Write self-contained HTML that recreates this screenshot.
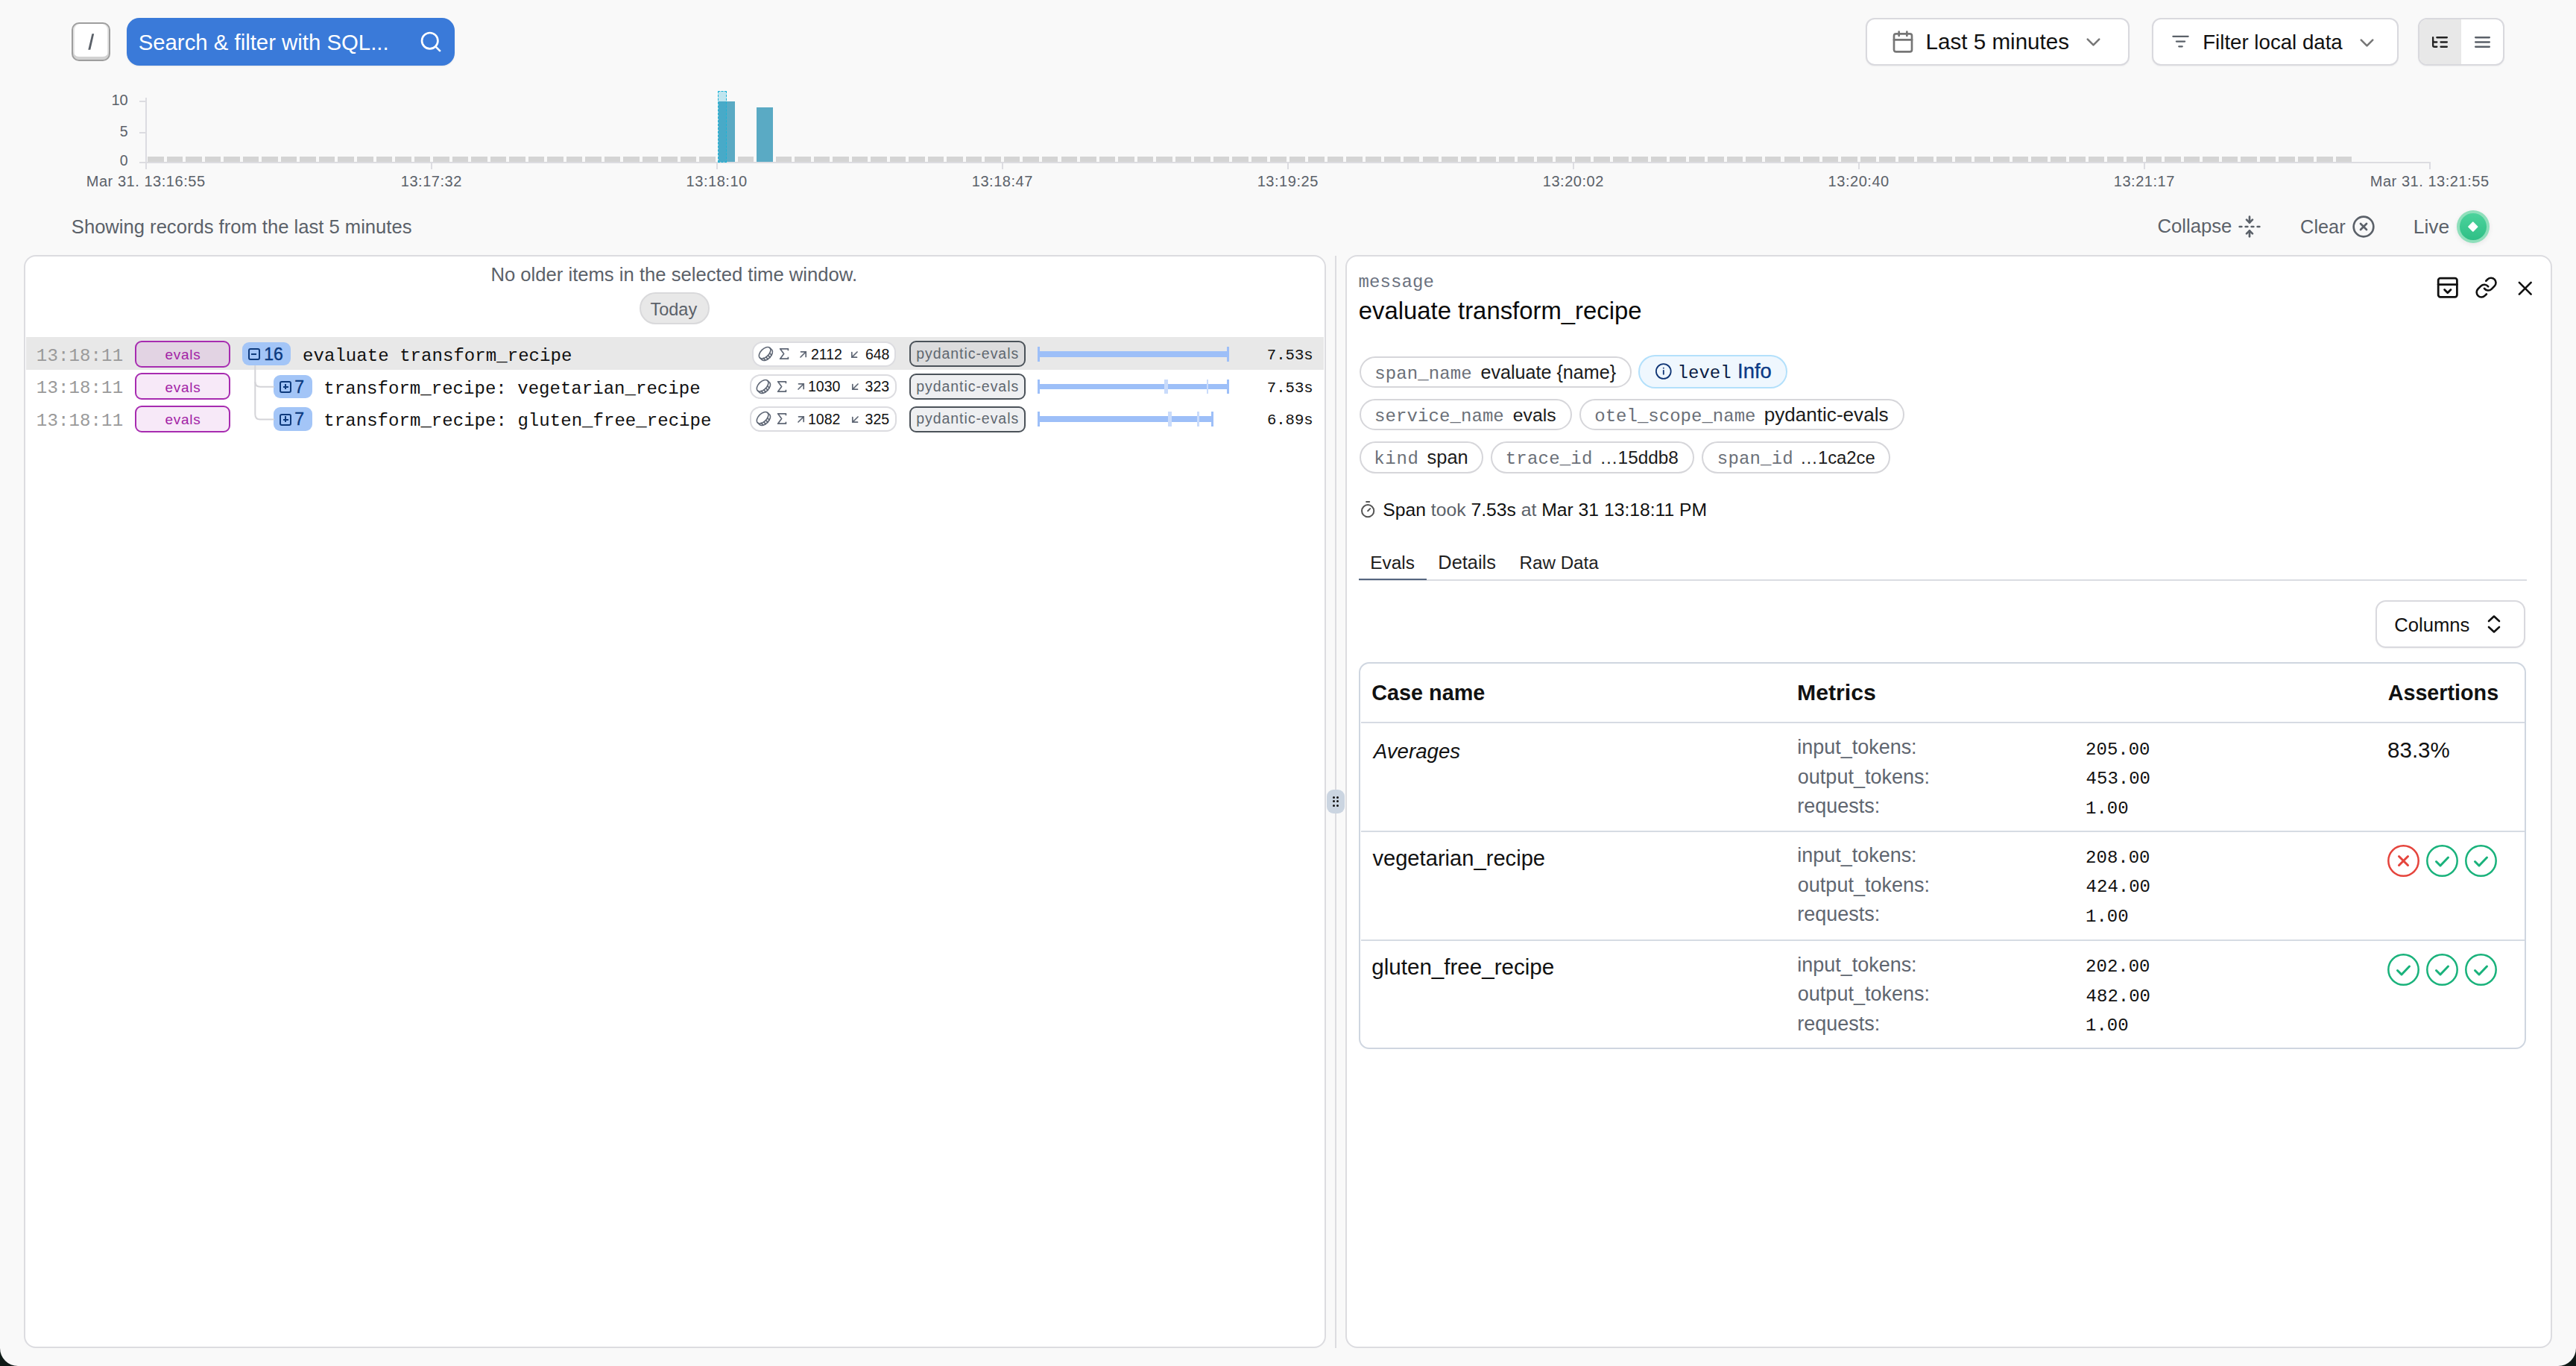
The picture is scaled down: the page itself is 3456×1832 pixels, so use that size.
<!DOCTYPE html>
<html><head><meta charset="utf-8"><style>
html,body{margin:0;padding:0;}
body{width:3456px;height:1832px;overflow:hidden;position:relative;background:#f9f9f9;font-family:"Liberation Sans",sans-serif;}
.t{position:absolute;white-space:pre;}
.r{position:absolute;}
</style></head><body>
<div class="r" style="left:96.20px;top:29.90px;width:51.50px;height:51.90px;background:#fff;border:2px solid #9e9e9e;border-radius:10px;box-sizing:border-box;box-shadow:inset 0 -4px 0 #d2d2d2, inset 2px 0 0 #e2e2e2, inset -2px 0 0 #e2e2e2;"></div>
<svg class="r" style="left:0;top:0" width="160" height="90"><path d="M123.4 45.2 H126.2 L121.3 66.8 H118.3 Z" fill="#5b6169"/></svg>
<div class="r" style="left:170.00px;top:24.00px;width:440.00px;height:64.00px;background:#3a7ad9;border-radius:17px;box-shadow:0 1px 2px rgba(0,0,0,.08);"></div>
<div class="t" style="left:185.67px;top:38.83px;font-size:29.35px;line-height:35px;color:#fff;font-family:'Liberation Sans', sans-serif;">Search &amp; filter with SQL...</div>
<svg class="r" style="left:561.90px;top:39.70px;" width="32.10" height="32.10" viewBox="0 0 24 24" fill="none" stroke="#fff" stroke-width="2" stroke-linecap="round" stroke-linejoin="round"><circle cx="11" cy="11" r="8"/><path d="m21 21-4.3-4.3"/></svg>
<div class="r" style="left:2503.00px;top:24.00px;width:354.00px;height:63.50px;background:#fff;border:2px solid #d9d9de;border-radius:12px;box-sizing:border-box;box-shadow:0 1px 2px rgba(0,0,0,.05);"></div>
<svg class="r" style="left:2537.00px;top:39.60px;" width="32.00" height="32.00" viewBox="0 0 24 24" fill="none" stroke="#767676" stroke-width="2" stroke-linecap="round" stroke-linejoin="round"><rect width="18" height="18" x="3" y="4" rx="2"/><path d="M16 2v4"/><path d="M8 2v4"/><path d="M3 10h18"/></svg>
<div class="t" style="left:2583.57px;top:37.94px;font-size:29.60px;line-height:36px;color:#111;font-family:'Liberation Sans', sans-serif;">Last 5 minutes</div>
<svg class="r" style="left:2792.50px;top:41.00px;" width="31.00" height="31.00" viewBox="0 0 24 24" fill="none" stroke="#777" stroke-width="2" stroke-linecap="round" stroke-linejoin="round"><path d="m6 9 6 6 6-6"/></svg>
<div class="r" style="left:2886.50px;top:24.00px;width:331.00px;height:63.50px;background:#fff;border:2px solid #d9d9de;border-radius:12px;box-sizing:border-box;box-shadow:0 1px 2px rgba(0,0,0,.05);"></div>
<svg class="r" style="left:2912.20px;top:42.00px;" width="27.00" height="27.00" viewBox="0 0 24 24" fill="none" stroke="#5b6169" stroke-width="2" stroke-linecap="round" stroke-linejoin="round"><path d="M3 6h18"/><path d="M7 12h10"/><path d="M10 18h4"/></svg>
<div class="t" style="left:2955.23px;top:39.91px;font-size:27.66px;line-height:33px;color:#111;font-family:'Liberation Sans', sans-serif;">Filter local data</div>
<svg class="r" style="left:3160.10px;top:41.50px;" width="31.00" height="31.00" viewBox="0 0 24 24" fill="none" stroke="#777" stroke-width="2" stroke-linecap="round" stroke-linejoin="round"><path d="m6 9 6 6 6-6"/></svg>
<div class="r" style="left:3244.00px;top:24.00px;width:116.00px;height:63.50px;background:#fff;border:2px solid #d9d9de;border-radius:12px;box-sizing:border-box;overflow:hidden;box-shadow:0 1px 2px rgba(0,0,0,.05);"></div>
<div class="r" style="left:3246.00px;top:26.00px;width:55.60px;height:59.50px;background:#e8e8e8;border-radius:10px 0 0 10px;"></div>
<svg class="r" style="left:3261.00px;top:43.50px;" width="25.00" height="25.00" viewBox="0 0 24 24" fill="none" stroke="#222" stroke-width="2.2" stroke-linecap="round" stroke-linejoin="round"><path d="M21 12h-8"/><path d="M21 6H8"/><path d="M21 18h-8"/><path d="M3 6v4c0 1.1.9 2 2 2h3"/><path d="M3 10v6c0 1.1.9 2 2 2h3"/></svg>
<svg class="r" style="left:3317.50px;top:43.50px;" width="25.00" height="25.00" viewBox="0 0 24 24" fill="none" stroke="#5b6169" stroke-width="2.2" stroke-linecap="round" stroke-linejoin="round"><path d="M3 6h18"/><path d="M3 12h18"/><path d="M3 18h18"/></svg>
<div class="r" style="left:195.00px;top:131.00px;width:2.00px;height:95.50px;background:#dcdce1;"></div>
<div class="r" style="left:187.00px;top:135.00px;width:9.00px;height:2.00px;background:#dcdce1;"></div>
<div class="r" style="left:187.00px;top:177.00px;width:9.00px;height:2.00px;background:#dcdce1;"></div>
<div class="r" style="left:187.00px;top:217.00px;width:9.00px;height:2.00px;background:#dcdce1;"></div>
<div class="r" style="left:187.00px;top:217.00px;width:3074.00px;height:2.00px;background:#dcdce1;"></div>
<div class="r" style="left:577.80px;top:218.00px;width:2.00px;height:8.60px;background:#dcdce1;"></div>
<div class="r" style="left:960.80px;top:218.00px;width:2.00px;height:8.60px;background:#dcdce1;"></div>
<div class="r" style="left:1343.80px;top:218.00px;width:2.00px;height:8.60px;background:#dcdce1;"></div>
<div class="r" style="left:1726.80px;top:218.00px;width:2.00px;height:8.60px;background:#dcdce1;"></div>
<div class="r" style="left:2109.80px;top:218.00px;width:2.00px;height:8.60px;background:#dcdce1;"></div>
<div class="r" style="left:2492.80px;top:218.00px;width:2.00px;height:8.60px;background:#dcdce1;"></div>
<div class="r" style="left:2875.80px;top:218.00px;width:2.00px;height:8.60px;background:#dcdce1;"></div>
<div class="r" style="left:3258.80px;top:218.00px;width:2.00px;height:8.60px;background:#dcdce1;"></div>
<div class="t" style="left:149.47px;top:121.95px;font-size:20.06px;line-height:24px;color:#5b6169;font-family:'Liberation Sans', sans-serif;">10</div>
<div class="t" style="left:160.72px;top:164.54px;font-size:19.50px;line-height:23px;color:#5b6169;font-family:'Liberation Sans', sans-serif;">5</div>
<div class="t" style="left:160.74px;top:204.44px;font-size:19.50px;line-height:23px;color:#5b6169;font-family:'Liberation Sans', sans-serif;">0</div>
<div class="t" style="left:115.76px;top:230.77px;font-size:20.00px;line-height:24px;color:#5b6169;font-family:'Liberation Sans', sans-serif;letter-spacing:0.538px;">Mar 31. 13:16:55</div>
<div class="t" style="left:537.73px;top:230.77px;font-size:20.00px;line-height:24px;color:#5b6169;font-family:'Liberation Sans', sans-serif;letter-spacing:0.538px;">13:17:32</div>
<div class="t" style="left:920.62px;top:230.77px;font-size:20.00px;line-height:24px;color:#5b6169;font-family:'Liberation Sans', sans-serif;letter-spacing:0.538px;">13:18:10</div>
<div class="t" style="left:1303.73px;top:230.77px;font-size:20.00px;line-height:24px;color:#5b6169;font-family:'Liberation Sans', sans-serif;letter-spacing:0.538px;">13:18:47</div>
<div class="t" style="left:1686.65px;top:230.77px;font-size:20.00px;line-height:24px;color:#5b6169;font-family:'Liberation Sans', sans-serif;letter-spacing:0.538px;">13:19:25</div>
<div class="t" style="left:2069.73px;top:230.77px;font-size:20.00px;line-height:24px;color:#5b6169;font-family:'Liberation Sans', sans-serif;letter-spacing:0.538px;">13:20:02</div>
<div class="t" style="left:2452.62px;top:230.77px;font-size:20.00px;line-height:24px;color:#5b6169;font-family:'Liberation Sans', sans-serif;letter-spacing:0.538px;">13:20:40</div>
<div class="t" style="left:2835.73px;top:230.77px;font-size:20.00px;line-height:24px;color:#5b6169;font-family:'Liberation Sans', sans-serif;letter-spacing:0.538px;">13:21:17</div>
<div class="t" style="left:3179.76px;top:230.77px;font-size:20.00px;line-height:24px;color:#5b6169;font-family:'Liberation Sans', sans-serif;letter-spacing:0.538px;">Mar 31. 13:21:55</div>
<div class="r" style="left:964.01px;top:136.20px;width:21.50px;height:80.40px;background:#5aaac4;"></div>
<div class="r" style="left:1015.06px;top:144.10px;width:21.50px;height:72.50px;background:#5aaac4;"></div>
<div class="r" style="left:198.20px;top:210.1px;width:21.5px;height:6.5px;background:#d4d4d4"></div><div class="r" style="left:223.73px;top:210.1px;width:21.5px;height:6.5px;background:#d4d4d4"></div><div class="r" style="left:249.25px;top:210.1px;width:21.5px;height:6.5px;background:#d4d4d4"></div><div class="r" style="left:274.78px;top:210.1px;width:21.5px;height:6.5px;background:#d4d4d4"></div><div class="r" style="left:300.31px;top:210.1px;width:21.5px;height:6.5px;background:#d4d4d4"></div><div class="r" style="left:325.83px;top:210.1px;width:21.5px;height:6.5px;background:#d4d4d4"></div><div class="r" style="left:351.36px;top:210.1px;width:21.5px;height:6.5px;background:#d4d4d4"></div><div class="r" style="left:376.89px;top:210.1px;width:21.5px;height:6.5px;background:#d4d4d4"></div><div class="r" style="left:402.42px;top:210.1px;width:21.5px;height:6.5px;background:#d4d4d4"></div><div class="r" style="left:427.94px;top:210.1px;width:21.5px;height:6.5px;background:#d4d4d4"></div><div class="r" style="left:453.47px;top:210.1px;width:21.5px;height:6.5px;background:#d4d4d4"></div><div class="r" style="left:479.00px;top:210.1px;width:21.5px;height:6.5px;background:#d4d4d4"></div><div class="r" style="left:504.52px;top:210.1px;width:21.5px;height:6.5px;background:#d4d4d4"></div><div class="r" style="left:530.05px;top:210.1px;width:21.5px;height:6.5px;background:#d4d4d4"></div><div class="r" style="left:555.58px;top:210.1px;width:21.5px;height:6.5px;background:#d4d4d4"></div><div class="r" style="left:581.11px;top:210.1px;width:21.5px;height:6.5px;background:#d4d4d4"></div><div class="r" style="left:606.63px;top:210.1px;width:21.5px;height:6.5px;background:#d4d4d4"></div><div class="r" style="left:632.16px;top:210.1px;width:21.5px;height:6.5px;background:#d4d4d4"></div><div class="r" style="left:657.69px;top:210.1px;width:21.5px;height:6.5px;background:#d4d4d4"></div><div class="r" style="left:683.21px;top:210.1px;width:21.5px;height:6.5px;background:#d4d4d4"></div><div class="r" style="left:708.74px;top:210.1px;width:21.5px;height:6.5px;background:#d4d4d4"></div><div class="r" style="left:734.27px;top:210.1px;width:21.5px;height:6.5px;background:#d4d4d4"></div><div class="r" style="left:759.79px;top:210.1px;width:21.5px;height:6.5px;background:#d4d4d4"></div><div class="r" style="left:785.32px;top:210.1px;width:21.5px;height:6.5px;background:#d4d4d4"></div><div class="r" style="left:810.85px;top:210.1px;width:21.5px;height:6.5px;background:#d4d4d4"></div><div class="r" style="left:836.38px;top:210.1px;width:21.5px;height:6.5px;background:#d4d4d4"></div><div class="r" style="left:861.90px;top:210.1px;width:21.5px;height:6.5px;background:#d4d4d4"></div><div class="r" style="left:887.43px;top:210.1px;width:21.5px;height:6.5px;background:#d4d4d4"></div><div class="r" style="left:912.96px;top:210.1px;width:21.5px;height:6.5px;background:#d4d4d4"></div><div class="r" style="left:938.48px;top:210.1px;width:21.5px;height:6.5px;background:#d4d4d4"></div><div class="r" style="left:989.54px;top:210.1px;width:21.5px;height:6.5px;background:#d4d4d4"></div><div class="r" style="left:1040.59px;top:210.1px;width:21.5px;height:6.5px;background:#d4d4d4"></div><div class="r" style="left:1066.12px;top:210.1px;width:21.5px;height:6.5px;background:#d4d4d4"></div><div class="r" style="left:1091.64px;top:210.1px;width:21.5px;height:6.5px;background:#d4d4d4"></div><div class="r" style="left:1117.17px;top:210.1px;width:21.5px;height:6.5px;background:#d4d4d4"></div><div class="r" style="left:1142.70px;top:210.1px;width:21.5px;height:6.5px;background:#d4d4d4"></div><div class="r" style="left:1168.23px;top:210.1px;width:21.5px;height:6.5px;background:#d4d4d4"></div><div class="r" style="left:1193.75px;top:210.1px;width:21.5px;height:6.5px;background:#d4d4d4"></div><div class="r" style="left:1219.28px;top:210.1px;width:21.5px;height:6.5px;background:#d4d4d4"></div><div class="r" style="left:1244.81px;top:210.1px;width:21.5px;height:6.5px;background:#d4d4d4"></div><div class="r" style="left:1270.33px;top:210.1px;width:21.5px;height:6.5px;background:#d4d4d4"></div><div class="r" style="left:1295.86px;top:210.1px;width:21.5px;height:6.5px;background:#d4d4d4"></div><div class="r" style="left:1321.39px;top:210.1px;width:21.5px;height:6.5px;background:#d4d4d4"></div><div class="r" style="left:1346.92px;top:210.1px;width:21.5px;height:6.5px;background:#d4d4d4"></div><div class="r" style="left:1372.44px;top:210.1px;width:21.5px;height:6.5px;background:#d4d4d4"></div><div class="r" style="left:1397.97px;top:210.1px;width:21.5px;height:6.5px;background:#d4d4d4"></div><div class="r" style="left:1423.50px;top:210.1px;width:21.5px;height:6.5px;background:#d4d4d4"></div><div class="r" style="left:1449.02px;top:210.1px;width:21.5px;height:6.5px;background:#d4d4d4"></div><div class="r" style="left:1474.55px;top:210.1px;width:21.5px;height:6.5px;background:#d4d4d4"></div><div class="r" style="left:1500.08px;top:210.1px;width:21.5px;height:6.5px;background:#d4d4d4"></div><div class="r" style="left:1525.60px;top:210.1px;width:21.5px;height:6.5px;background:#d4d4d4"></div><div class="r" style="left:1551.13px;top:210.1px;width:21.5px;height:6.5px;background:#d4d4d4"></div><div class="r" style="left:1576.66px;top:210.1px;width:21.5px;height:6.5px;background:#d4d4d4"></div><div class="r" style="left:1602.19px;top:210.1px;width:21.5px;height:6.5px;background:#d4d4d4"></div><div class="r" style="left:1627.71px;top:210.1px;width:21.5px;height:6.5px;background:#d4d4d4"></div><div class="r" style="left:1653.24px;top:210.1px;width:21.5px;height:6.5px;background:#d4d4d4"></div><div class="r" style="left:1678.77px;top:210.1px;width:21.5px;height:6.5px;background:#d4d4d4"></div><div class="r" style="left:1704.29px;top:210.1px;width:21.5px;height:6.5px;background:#d4d4d4"></div><div class="r" style="left:1729.82px;top:210.1px;width:21.5px;height:6.5px;background:#d4d4d4"></div><div class="r" style="left:1755.35px;top:210.1px;width:21.5px;height:6.5px;background:#d4d4d4"></div><div class="r" style="left:1780.87px;top:210.1px;width:21.5px;height:6.5px;background:#d4d4d4"></div><div class="r" style="left:1806.40px;top:210.1px;width:21.5px;height:6.5px;background:#d4d4d4"></div><div class="r" style="left:1831.93px;top:210.1px;width:21.5px;height:6.5px;background:#d4d4d4"></div><div class="r" style="left:1857.46px;top:210.1px;width:21.5px;height:6.5px;background:#d4d4d4"></div><div class="r" style="left:1882.98px;top:210.1px;width:21.5px;height:6.5px;background:#d4d4d4"></div><div class="r" style="left:1908.51px;top:210.1px;width:21.5px;height:6.5px;background:#d4d4d4"></div><div class="r" style="left:1934.04px;top:210.1px;width:21.5px;height:6.5px;background:#d4d4d4"></div><div class="r" style="left:1959.56px;top:210.1px;width:21.5px;height:6.5px;background:#d4d4d4"></div><div class="r" style="left:1985.09px;top:210.1px;width:21.5px;height:6.5px;background:#d4d4d4"></div><div class="r" style="left:2010.62px;top:210.1px;width:21.5px;height:6.5px;background:#d4d4d4"></div><div class="r" style="left:2036.14px;top:210.1px;width:21.5px;height:6.5px;background:#d4d4d4"></div><div class="r" style="left:2061.67px;top:210.1px;width:21.5px;height:6.5px;background:#d4d4d4"></div><div class="r" style="left:2087.20px;top:210.1px;width:21.5px;height:6.5px;background:#d4d4d4"></div><div class="r" style="left:2112.72px;top:210.1px;width:21.5px;height:6.5px;background:#d4d4d4"></div><div class="r" style="left:2138.25px;top:210.1px;width:21.5px;height:6.5px;background:#d4d4d4"></div><div class="r" style="left:2163.78px;top:210.1px;width:21.5px;height:6.5px;background:#d4d4d4"></div><div class="r" style="left:2189.31px;top:210.1px;width:21.5px;height:6.5px;background:#d4d4d4"></div><div class="r" style="left:2214.83px;top:210.1px;width:21.5px;height:6.5px;background:#d4d4d4"></div><div class="r" style="left:2240.36px;top:210.1px;width:21.5px;height:6.5px;background:#d4d4d4"></div><div class="r" style="left:2265.89px;top:210.1px;width:21.5px;height:6.5px;background:#d4d4d4"></div><div class="r" style="left:2291.41px;top:210.1px;width:21.5px;height:6.5px;background:#d4d4d4"></div><div class="r" style="left:2316.94px;top:210.1px;width:21.5px;height:6.5px;background:#d4d4d4"></div><div class="r" style="left:2342.47px;top:210.1px;width:21.5px;height:6.5px;background:#d4d4d4"></div><div class="r" style="left:2367.99px;top:210.1px;width:21.5px;height:6.5px;background:#d4d4d4"></div><div class="r" style="left:2393.52px;top:210.1px;width:21.5px;height:6.5px;background:#d4d4d4"></div><div class="r" style="left:2419.05px;top:210.1px;width:21.5px;height:6.5px;background:#d4d4d4"></div><div class="r" style="left:2444.58px;top:210.1px;width:21.5px;height:6.5px;background:#d4d4d4"></div><div class="r" style="left:2470.10px;top:210.1px;width:21.5px;height:6.5px;background:#d4d4d4"></div><div class="r" style="left:2495.63px;top:210.1px;width:21.5px;height:6.5px;background:#d4d4d4"></div><div class="r" style="left:2521.16px;top:210.1px;width:21.5px;height:6.5px;background:#d4d4d4"></div><div class="r" style="left:2546.68px;top:210.1px;width:21.5px;height:6.5px;background:#d4d4d4"></div><div class="r" style="left:2572.21px;top:210.1px;width:21.5px;height:6.5px;background:#d4d4d4"></div><div class="r" style="left:2597.74px;top:210.1px;width:21.5px;height:6.5px;background:#d4d4d4"></div><div class="r" style="left:2623.26px;top:210.1px;width:21.5px;height:6.5px;background:#d4d4d4"></div><div class="r" style="left:2648.79px;top:210.1px;width:21.5px;height:6.5px;background:#d4d4d4"></div><div class="r" style="left:2674.32px;top:210.1px;width:21.5px;height:6.5px;background:#d4d4d4"></div><div class="r" style="left:2699.85px;top:210.1px;width:21.5px;height:6.5px;background:#d4d4d4"></div><div class="r" style="left:2725.37px;top:210.1px;width:21.5px;height:6.5px;background:#d4d4d4"></div><div class="r" style="left:2750.90px;top:210.1px;width:21.5px;height:6.5px;background:#d4d4d4"></div><div class="r" style="left:2776.43px;top:210.1px;width:21.5px;height:6.5px;background:#d4d4d4"></div><div class="r" style="left:2801.95px;top:210.1px;width:21.5px;height:6.5px;background:#d4d4d4"></div><div class="r" style="left:2827.48px;top:210.1px;width:21.5px;height:6.5px;background:#d4d4d4"></div><div class="r" style="left:2853.01px;top:210.1px;width:21.5px;height:6.5px;background:#d4d4d4"></div><div class="r" style="left:2878.53px;top:210.1px;width:21.5px;height:6.5px;background:#d4d4d4"></div><div class="r" style="left:2904.06px;top:210.1px;width:21.5px;height:6.5px;background:#d4d4d4"></div><div class="r" style="left:2929.59px;top:210.1px;width:21.5px;height:6.5px;background:#d4d4d4"></div><div class="r" style="left:2955.12px;top:210.1px;width:21.5px;height:6.5px;background:#d4d4d4"></div><div class="r" style="left:2980.64px;top:210.1px;width:21.5px;height:6.5px;background:#d4d4d4"></div><div class="r" style="left:3006.17px;top:210.1px;width:21.5px;height:6.5px;background:#d4d4d4"></div><div class="r" style="left:3031.70px;top:210.1px;width:21.5px;height:6.5px;background:#d4d4d4"></div><div class="r" style="left:3057.22px;top:210.1px;width:21.5px;height:6.5px;background:#d4d4d4"></div><div class="r" style="left:3082.75px;top:210.1px;width:21.5px;height:6.5px;background:#d4d4d4"></div><div class="r" style="left:3108.28px;top:210.1px;width:21.5px;height:6.5px;background:#d4d4d4"></div><div class="r" style="left:3133.80px;top:210.1px;width:21.5px;height:6.5px;background:#d4d4d4"></div>
<div class="r" style="left:963.30px;top:122.20px;width:12.20px;height:96.30px;background:rgba(20,170,210,.25);border:1.6px dashed #1cb3d6;box-sizing:border-box;"></div>
<div class="t" style="left:95.84px;top:288.72px;font-size:25.60px;line-height:31px;color:#5b6169;font-family:'Liberation Sans', sans-serif;">Showing records from the last 5 minutes</div>
<div class="t" style="left:2894.39px;top:288.39px;font-size:25.71px;line-height:31px;color:#5b6169;font-family:'Liberation Sans', sans-serif;">Collapse</div>
<svg class="r" style="left:3001.70px;top:287.70px;" width="32.00" height="32.00" viewBox="0 0 24 24" fill="none" stroke="#5b6169" stroke-width="2" stroke-linecap="round" stroke-linejoin="round"><path d="M12 22v-6"/><path d="M12 8V2"/><path d="M4 12H2"/><path d="M10 12H8"/><path d="M16 12h-2"/><path d="M22 12h-2"/><path d="m15 19-3-3-3 3"/><path d="m15 5-3 3-3-3"/></svg>
<div class="t" style="left:3086.11px;top:289.02px;font-size:25.32px;line-height:30px;color:#5b6169;font-family:'Liberation Sans', sans-serif;">Clear</div>
<svg class="r" style="left:3155.00px;top:287.70px;" width="32.00" height="32.00" viewBox="0 0 24 24" fill="none" stroke="#5b6169" stroke-width="2" stroke-linecap="round" stroke-linejoin="round"><circle cx="12" cy="12" r="10"/><path d="m15 9-6 6"/><path d="m9 9 6 6"/></svg>
<div class="t" style="left:3237.84px;top:287.67px;font-size:26.35px;line-height:32px;color:#5b6169;font-family:'Liberation Sans', sans-serif;">Live</div>
<div class="r" style="left:3295.7px;top:281.8px;width:44.5px;height:44.5px;border-radius:50%;background:#8fdfbb;box-shadow:0 2px 6px rgba(0,0,0,.08)"></div>
<div class="r" style="left:3300.3px;top:286.4px;width:35.5px;height:35.5px;border-radius:50%;background:linear-gradient(#4cd39c,#2fbf86)"></div>
<div class="r" style="left:3313.2px;top:299.3px;width:9.6px;height:9.6px;background:#fff;transform:rotate(45deg);border-radius:1px"></div>
<!--PANELS-->
<div class="r" style="left:32.00px;top:342.00px;width:1747.00px;height:1466.00px;background:#fff;border:2px solid #dcdce0;border-radius:16px;box-sizing:border-box;"></div>
<div class="r" style="left:34.80px;top:452.20px;width:1741.20px;height:43.40px;background:#e8e8e8;"></div>
<div class="r" style="left:1791.00px;top:343.00px;width:2.00px;height:1464.90px;background:#dcdce0;"></div>
<div class="r" style="left:1780.10px;top:1059.20px;width:23.60px;height:31.70px;background:#cbd5e1;border-radius:9px;"></div>
<div class="r" style="left:1787.90px;top:1068.10px;width:3px;height:3px;border-radius:50%;background:#111"></div>
<div class="r" style="left:1787.90px;top:1073.40px;width:3px;height:3px;border-radius:50%;background:#111"></div>
<div class="r" style="left:1787.90px;top:1078.80px;width:3px;height:3px;border-radius:50%;background:#111"></div>
<div class="r" style="left:1793.30px;top:1068.10px;width:3px;height:3px;border-radius:50%;background:#111"></div>
<div class="r" style="left:1793.30px;top:1073.40px;width:3px;height:3px;border-radius:50%;background:#111"></div>
<div class="r" style="left:1793.30px;top:1078.80px;width:3px;height:3px;border-radius:50%;background:#111"></div>
<div class="t" style="left:658.40px;top:352.91px;font-size:25.65px;line-height:31px;color:#5b6169;font-family:'Liberation Sans', sans-serif;">No older items in the selected time window.</div>
<div class="r" style="left:858.40px;top:392.40px;width:94.00px;height:43.00px;background:#e8e8e8;border:2px solid #d9d9db;border-radius:22px;box-sizing:border-box;"></div>
<div class="t" style="left:872.47px;top:400.66px;font-size:23.49px;line-height:28px;color:#5b6169;font-family:'Liberation Sans', sans-serif;">Today</div>
<div class="t" style="left:48.87px;top:462.91px;font-size:24.00px;line-height:29px;color:#9a9a9a;font-family:'Liberation Mono', monospace;letter-spacing:0.139px;">13:18:11</div>
<div class="r" style="left:181.00px;top:456.70px;width:127.80px;height:36.20px;background:#e2d3e3;border:2px solid #a72bb0;border-radius:9px;box-sizing:border-box;"></div>
<div class="t" style="left:221.49px;top:464.01px;font-size:19.00px;line-height:23px;color:#a21fa6;font-family:'Liberation Sans', sans-serif;letter-spacing:0.735px;">evals</div>
<div class="r" style="left:325.00px;top:459.30px;width:65.00px;height:31.20px;background:#a3c5f7;border-radius:9px;"></div>
<div class="r" style="left:332.60px;top:467.40px;width:16.40px;height:16.00px;border:2px solid #0e3a7c;border-radius:3px;box-sizing:border-box;"></div>
<div class="r" style="left:337.10px;top:474.40px;width:7.40px;height:2.00px;background:#0e3a7c;"></div>
<div class="t" style="left:354.25px;top:461.23px;font-size:23.00px;line-height:28px;color:#0b3a80;font-family:'Liberation Sans', sans-serif;-webkit-text-stroke:0.4px #0b3a80;">16</div>
<div class="t" style="left:406.04px;top:463.21px;font-size:24.00px;line-height:29px;color:#111;font-family:'Liberation Mono', monospace;letter-spacing:0.053px;">evaluate transform_recipe</div>
<div class="r" style="left:1009.40px;top:458.20px;width:193.00px;height:33.60px;background:#fff;border:2px solid #dcdce0;border-radius:14px;box-sizing:border-box;"></div>
<svg class="r" style="left:1017.00px;top:463.00px" width="24" height="24" viewBox="0 0 24 24" fill="none" stroke="#5f6775" stroke-width="1.6" stroke-linecap="round" stroke-linejoin="round"><ellipse cx="9.1" cy="10.3" rx="9.5" ry="5.5" transform="rotate(-45 9.1 10.3)"/><path d="M15.9 3.5 L18.7 6.3 A9.5 5.5 -45 0 1 5.3 19.7 L2.5 16.9"/><path d="M13.4 13.6 L16.2 16.4 M10.6 15.8 L13.2 18.6 M7.2 17.2 L9.6 19.9 M15.6 10.6 L18.1 13.3"/></svg>
<svg class="r" style="left:1045.00px;top:466.00px" width="14" height="17" fill="none" stroke="#5f6775" stroke-width="1.7" stroke-linejoin="round"><path d="M12.4 4.2 V1.8 H1.6 L6.6 8.5 L1.6 15.2 H12.4 V12.8"/></svg>
<svg class="r" style="left:1072.00px;top:469.50px" width="11" height="11" fill="none" stroke="#5f6775" stroke-width="1.7" stroke-linecap="round"><path d="M2 9 L9 2 M2.5 1.8 H9.2 V8.5"/></svg>
<svg class="r" style="left:1140.50px;top:469.50px" width="11" height="11" fill="none" stroke="#5f6775" stroke-width="1.7" stroke-linecap="round"><path d="M9 2 L2 9 M1.8 2.5 V9.2 H8.5"/></svg>
<div class="t" style="left:1088.02px;top:463.74px;font-size:19.50px;line-height:23px;color:#111;font-family:'Liberation Sans', sans-serif;">2112</div>
<div class="t" style="left:1160.91px;top:463.74px;font-size:19.50px;line-height:23px;color:#111;font-family:'Liberation Sans', sans-serif;">648</div>
<div class="r" style="left:1220.30px;top:457.40px;width:155.30px;height:35.00px;background:#dcdcdd;border:2px solid #4b5259;border-radius:9px;box-sizing:border-box;"></div>
<div class="t" style="left:1229.14px;top:463.24px;font-size:19.50px;line-height:23px;color:#5f6770;font-family:'Liberation Sans', sans-serif;letter-spacing:0.955px;">pydantic-evals</div>
<div class="r" style="left:1393.00px;top:471.10px;width:255.00px;height:7.80px;background:#9dbff8;"></div>
<div class="r" style="left:1392.00px;top:465.20px;width:3.00px;height:19.70px;background:#9dbff8;"></div>
<div class="r" style="left:1646.00px;top:465.20px;width:3.00px;height:19.70px;background:#9dbff8;"></div>
<div class="t" style="left:1699.81px;top:464.01px;font-size:20.63px;line-height:25px;color:#111;font-family:'Liberation Mono', monospace;">7.53s</div>
<div class="t" style="left:48.87px;top:506.46px;font-size:24.00px;line-height:29px;color:#9a9a9a;font-family:'Liberation Mono', monospace;letter-spacing:0.139px;">13:18:11</div>
<div class="r" style="left:181.00px;top:500.25px;width:127.80px;height:36.20px;background:#f7e9f8;border:2px solid #a72bb0;border-radius:9px;box-sizing:border-box;"></div>
<div class="t" style="left:221.49px;top:507.56px;font-size:19.00px;line-height:23px;color:#a21fa6;font-family:'Liberation Sans', sans-serif;letter-spacing:0.735px;">evals</div>
<div class="r" style="left:367.40px;top:502.85px;width:51.20px;height:31.20px;background:#a3c5f7;border-radius:9px;"></div>
<div class="r" style="left:375.00px;top:510.95px;width:16.40px;height:16.00px;border:2px solid #0e3a7c;border-radius:3px;box-sizing:border-box;"></div>
<div class="r" style="left:379.50px;top:517.95px;width:7.40px;height:2.00px;background:#0e3a7c;"></div>
<div class="r" style="left:382.20px;top:514.65px;width:2.00px;height:7.60px;background:#0e3a7c;"></div>
<div class="t" style="left:395.32px;top:504.78px;font-size:23.00px;line-height:28px;color:#0b3a80;font-family:'Liberation Sans', sans-serif;-webkit-text-stroke:0.4px #0b3a80;">7</div>
<div class="t" style="left:434.37px;top:506.76px;font-size:24.00px;line-height:29px;color:#111;font-family:'Liberation Mono', monospace;letter-spacing:0.033px;">transform_recipe: vegetarian_recipe</div>
<div class="r" style="left:1005.50px;top:501.75px;width:197.50px;height:33.60px;background:#fff;border:2px solid #dcdce0;border-radius:14px;box-sizing:border-box;"></div>
<svg class="r" style="left:1014.00px;top:506.55px" width="24" height="24" viewBox="0 0 24 24" fill="none" stroke="#5f6775" stroke-width="1.6" stroke-linecap="round" stroke-linejoin="round"><ellipse cx="9.1" cy="10.3" rx="9.5" ry="5.5" transform="rotate(-45 9.1 10.3)"/><path d="M15.9 3.5 L18.7 6.3 A9.5 5.5 -45 0 1 5.3 19.7 L2.5 16.9"/><path d="M13.4 13.6 L16.2 16.4 M10.6 15.8 L13.2 18.6 M7.2 17.2 L9.6 19.9 M15.6 10.6 L18.1 13.3"/></svg>
<svg class="r" style="left:1042.00px;top:509.55px" width="14" height="17" fill="none" stroke="#5f6775" stroke-width="1.7" stroke-linejoin="round"><path d="M12.4 4.2 V1.8 H1.6 L6.6 8.5 L1.6 15.2 H12.4 V12.8"/></svg>
<svg class="r" style="left:1069.00px;top:513.05px" width="11" height="11" fill="none" stroke="#5f6775" stroke-width="1.7" stroke-linecap="round"><path d="M2 9 L9 2 M2.5 1.8 H9.2 V8.5"/></svg>
<svg class="r" style="left:1141.50px;top:513.05px" width="11" height="11" fill="none" stroke="#5f6775" stroke-width="1.7" stroke-linecap="round"><path d="M9 2 L2 9 M1.8 2.5 V9.2 H8.5"/></svg>
<div class="t" style="left:1084.01px;top:507.29px;font-size:19.50px;line-height:23px;color:#111;font-family:'Liberation Sans', sans-serif;">1030</div>
<div class="t" style="left:1160.62px;top:507.29px;font-size:19.50px;line-height:23px;color:#111;font-family:'Liberation Sans', sans-serif;">323</div>
<div class="r" style="left:1220.30px;top:500.95px;width:155.30px;height:35.00px;background:#eeeff1;border:2px solid #4b5259;border-radius:9px;box-sizing:border-box;"></div>
<div class="t" style="left:1229.14px;top:506.79px;font-size:19.50px;line-height:23px;color:#5f6770;font-family:'Liberation Sans', sans-serif;letter-spacing:0.955px;">pydantic-evals</div>
<div class="r" style="left:1393.00px;top:514.65px;width:255.00px;height:7.80px;background:#9dbff8;"></div>
<div class="r" style="left:1562.00px;top:508.75px;width:4.80px;height:19.70px;background:#c9dbfb;"></div>
<div class="r" style="left:1619.10px;top:508.75px;width:1.90px;height:19.70px;background:#c9dbfb;"></div>
<div class="r" style="left:1392.00px;top:508.75px;width:3.00px;height:19.70px;background:#9dbff8;"></div>
<div class="r" style="left:1646.00px;top:508.75px;width:3.00px;height:19.70px;background:#9dbff8;"></div>
<div class="t" style="left:1699.81px;top:507.56px;font-size:20.63px;line-height:25px;color:#111;font-family:'Liberation Mono', monospace;">7.53s</div>
<div class="t" style="left:48.87px;top:550.01px;font-size:24.00px;line-height:29px;color:#9a9a9a;font-family:'Liberation Mono', monospace;letter-spacing:0.139px;">13:18:11</div>
<div class="r" style="left:181.00px;top:543.80px;width:127.80px;height:36.20px;background:#f7e9f8;border:2px solid #a72bb0;border-radius:9px;box-sizing:border-box;"></div>
<div class="t" style="left:221.49px;top:551.11px;font-size:19.00px;line-height:23px;color:#a21fa6;font-family:'Liberation Sans', sans-serif;letter-spacing:0.735px;">evals</div>
<div class="r" style="left:367.40px;top:546.40px;width:51.20px;height:31.20px;background:#a3c5f7;border-radius:9px;"></div>
<div class="r" style="left:375.00px;top:554.50px;width:16.40px;height:16.00px;border:2px solid #0e3a7c;border-radius:3px;box-sizing:border-box;"></div>
<div class="r" style="left:379.50px;top:561.50px;width:7.40px;height:2.00px;background:#0e3a7c;"></div>
<div class="r" style="left:382.20px;top:558.20px;width:2.00px;height:7.60px;background:#0e3a7c;"></div>
<div class="t" style="left:395.32px;top:548.33px;font-size:23.00px;line-height:28px;color:#0b3a80;font-family:'Liberation Sans', sans-serif;-webkit-text-stroke:0.4px #0b3a80;">7</div>
<div class="t" style="left:434.37px;top:550.31px;font-size:24.00px;line-height:29px;color:#111;font-family:'Liberation Mono', monospace;letter-spacing:0.044px;">transform_recipe: gluten_free_recipe</div>
<div class="r" style="left:1005.50px;top:545.30px;width:197.50px;height:33.60px;background:#fff;border:2px solid #dcdce0;border-radius:14px;box-sizing:border-box;"></div>
<svg class="r" style="left:1014.00px;top:550.10px" width="24" height="24" viewBox="0 0 24 24" fill="none" stroke="#5f6775" stroke-width="1.6" stroke-linecap="round" stroke-linejoin="round"><ellipse cx="9.1" cy="10.3" rx="9.5" ry="5.5" transform="rotate(-45 9.1 10.3)"/><path d="M15.9 3.5 L18.7 6.3 A9.5 5.5 -45 0 1 5.3 19.7 L2.5 16.9"/><path d="M13.4 13.6 L16.2 16.4 M10.6 15.8 L13.2 18.6 M7.2 17.2 L9.6 19.9 M15.6 10.6 L18.1 13.3"/></svg>
<svg class="r" style="left:1042.00px;top:553.10px" width="14" height="17" fill="none" stroke="#5f6775" stroke-width="1.7" stroke-linejoin="round"><path d="M12.4 4.2 V1.8 H1.6 L6.6 8.5 L1.6 15.2 H12.4 V12.8"/></svg>
<svg class="r" style="left:1069.00px;top:556.60px" width="11" height="11" fill="none" stroke="#5f6775" stroke-width="1.7" stroke-linecap="round"><path d="M2 9 L9 2 M2.5 1.8 H9.2 V8.5"/></svg>
<svg class="r" style="left:1141.50px;top:556.60px" width="11" height="11" fill="none" stroke="#5f6775" stroke-width="1.7" stroke-linecap="round"><path d="M9 2 L2 9 M1.8 2.5 V9.2 H8.5"/></svg>
<div class="t" style="left:1084.01px;top:550.84px;font-size:19.50px;line-height:23px;color:#111;font-family:'Liberation Sans', sans-serif;">1082</div>
<div class="t" style="left:1160.58px;top:550.84px;font-size:19.50px;line-height:23px;color:#111;font-family:'Liberation Sans', sans-serif;">325</div>
<div class="r" style="left:1220.30px;top:544.50px;width:155.30px;height:35.00px;background:#eeeff1;border:2px solid #4b5259;border-radius:9px;box-sizing:border-box;"></div>
<div class="t" style="left:1229.14px;top:550.34px;font-size:19.50px;line-height:23px;color:#5f6770;font-family:'Liberation Sans', sans-serif;letter-spacing:0.955px;">pydantic-evals</div>
<div class="r" style="left:1393.00px;top:558.20px;width:234.00px;height:7.80px;background:#9dbff8;"></div>
<div class="r" style="left:1567.00px;top:552.30px;width:5.00px;height:19.70px;background:#c9dbfb;"></div>
<div class="r" style="left:1606.00px;top:552.30px;width:3.00px;height:19.70px;background:#c9dbfb;"></div>
<div class="r" style="left:1392.00px;top:552.30px;width:3.00px;height:19.70px;background:#9dbff8;"></div>
<div class="r" style="left:1625.00px;top:552.30px;width:3.00px;height:19.70px;background:#9dbff8;"></div>
<div class="t" style="left:1699.88px;top:551.12px;font-size:20.60px;line-height:25px;color:#111;font-family:'Liberation Mono', monospace;">6.89s</div>
<svg class="r" style="left:330px;top:488px" width="40" height="80" fill="none" stroke="#d4d4d8" stroke-width="2"><path d="M12.3 2 V24 Q12.3 30.7 19 30.7 H38"/><path d="M12.3 24 V67.5 Q12.3 74.5 19 74.5 H38"/></svg>
<div class="r" style="left:1805.00px;top:342.00px;width:1619.00px;height:1466.00px;background:#fff;border:2px solid #dcdce0;border-radius:16px;box-sizing:border-box;"></div>
<div class="t" style="left:1822.44px;top:364.11px;font-size:24.00px;line-height:29px;color:#6b7280;font-family:'Liberation Mono', monospace;letter-spacing:0.104px;">message</div>
<div class="t" style="left:1822.70px;top:396.91px;font-size:32.86px;line-height:39px;color:#0a0a0a;font-family:'Liberation Sans', sans-serif;">evaluate transform_recipe</div>
<svg class="r" style="left:3267.10px;top:368.90px;" width="33.60" height="33.60" viewBox="0 0 24 24" fill="none" stroke="#111" stroke-width="2" stroke-linecap="round" stroke-linejoin="round"><rect width="18" height="18" x="3" y="3" rx="2"/><path d="M3 9h18"/><path d="m15 14-3 3-3-3"/></svg>
<svg class="r" style="left:3320.40px;top:370.10px;" width="31.20" height="31.20" viewBox="0 0 24 24" fill="none" stroke="#111" stroke-width="2" stroke-linecap="round" stroke-linejoin="round"><path d="M10 13a5 5 0 0 0 7.54.54l3-3a5 5 0 0 0-7.07-7.07l-1.72 1.71"/><path d="M14 11a5 5 0 0 0-7.54-.54l-3 3a5 5 0 0 0 7.07 7.07l1.71-1.71"/></svg>
<svg class="r" style="left:3372.20px;top:370.60px;" width="31.50" height="31.50" viewBox="0 0 24 24" fill="none" stroke="#111" stroke-width="2" stroke-linecap="round" stroke-linejoin="round"><path d="M18 6 6 18"/><path d="m6 6 12 12"/></svg>
<div class="r" style="left:1823.50px;top:477.80px;width:365.70px;height:42.60px;background:#fff;border:2px solid #d6d6da;border-radius:22px;box-sizing:border-box;"></div>
<div class="t" style="left:1844.14px;top:487.21px;font-size:24.00px;line-height:29px;color:#6b7078;font-family:'Liberation Mono', monospace;letter-spacing:0.102px;">span_name</div>
<div class="t" style="left:1986.43px;top:484.39px;font-size:25.13px;line-height:30px;color:#1b1b1b;font-family:'Liberation Sans', sans-serif;">evaluate {name}</div>
<div class="r" style="left:2198.00px;top:476.00px;width:200.00px;height:44.60px;background:#eff7fe;border:2px solid #b3e0fb;border-radius:23px;box-sizing:border-box;"></div>
<svg class="r" style="left:2210px;top:480px" width="40" height="40" fill="none" stroke="#0f3575" stroke-width="1.8" stroke-linecap="round"><circle cx="21.8" cy="18" r="9.9"/><path d="M21.8 16.8 V21.8"/><path d="M21.8 13.6 V13.7"/></svg>
<div class="t" style="left:2250.57px;top:486.21px;font-size:24.00px;line-height:29px;color:#0b1d45;font-family:'Liberation Mono', monospace;letter-spacing:0.010px;">level</div>
<div class="t" style="left:2331.07px;top:481.11px;font-size:27.38px;line-height:33px;color:#0b3a85;font-family:'Liberation Sans', sans-serif;-webkit-text-stroke:0.35px #0b3a85;">Info</div>
<div class="r" style="left:1823.50px;top:534.90px;width:285.40px;height:42.60px;background:#fff;border:2px solid #d6d6da;border-radius:22px;box-sizing:border-box;"></div>
<div class="t" style="left:1844.04px;top:544.31px;font-size:24.00px;line-height:29px;color:#6b7078;font-family:'Liberation Mono', monospace;letter-spacing:0.083px;">service_name</div>
<div class="t" style="left:2029.75px;top:541.61px;font-size:24.78px;line-height:30px;color:#1b1b1b;font-family:'Liberation Sans', sans-serif;">evals</div>
<div class="r" style="left:2119.00px;top:534.90px;width:436.30px;height:42.60px;background:#fff;border:2px solid #d6d6da;border-radius:22px;box-sizing:border-box;"></div>
<div class="t" style="left:2139.28px;top:544.31px;font-size:24.00px;line-height:29px;color:#6b7078;font-family:'Liberation Mono', monospace;letter-spacing:0.012px;">otel_scope_name</div>
<div class="t" style="left:2366.72px;top:540.65px;font-size:26.10px;line-height:31px;color:#1b1b1b;font-family:'Liberation Sans', sans-serif;">pydantic-evals</div>
<div class="r" style="left:1823.50px;top:592.00px;width:166.30px;height:42.60px;background:#fff;border:2px solid #d6d6da;border-radius:22px;box-sizing:border-box;"></div>
<div class="t" style="left:1843.23px;top:600.61px;font-size:24.00px;line-height:29px;color:#6b7078;font-family:'Liberation Mono', monospace;letter-spacing:0.689px;">kind</div>
<div class="t" style="left:1914.59px;top:597.70px;font-size:25.39px;line-height:30px;color:#1b1b1b;font-family:'Liberation Sans', sans-serif;">span</div>
<div class="r" style="left:1999.80px;top:592.00px;width:273.30px;height:42.60px;background:#fff;border:2px solid #d6d6da;border-radius:22px;box-sizing:border-box;"></div>
<div class="t" style="left:2019.77px;top:600.61px;font-size:24.00px;line-height:29px;color:#6b7078;font-family:'Liberation Mono', monospace;letter-spacing:0.188px;">trace_id</div>
<div class="t" style="left:2146.30px;top:598.57px;font-size:24.32px;line-height:29px;color:#1b1b1b;font-family:'Liberation Sans', sans-serif;">…15ddb8</div>
<div class="r" style="left:2283.00px;top:592.00px;width:253.00px;height:42.60px;background:#fff;border:2px solid #d6d6da;border-radius:22px;box-sizing:border-box;"></div>
<div class="t" style="left:2303.84px;top:600.61px;font-size:24.00px;line-height:29px;color:#6b7078;font-family:'Liberation Mono', monospace;letter-spacing:0.158px;">span_id</div>
<div class="t" style="left:2415.06px;top:598.74px;font-size:23.84px;line-height:29px;color:#1b1b1b;font-family:'Liberation Sans', sans-serif;">…1ca2ce</div>
<svg class="r" style="left:1822.90px;top:670.70px;" width="24.30" height="24.30" viewBox="0 0 24 24" fill="none" stroke="#555" stroke-width="2" stroke-linecap="round" stroke-linejoin="round"><line x1="10" x2="14" y1="2" y2="2"/><line x1="12" x2="15" y1="14" y2="11"/><circle cx="12" cy="14" r="8"/></svg>
<div class="t" style="left:1855.28px;top:668.83px;font-size:24.71px;line-height:30px;font-family:'Liberation Sans', sans-serif;"><span style="color:#111">Span </span><span style="color:#5b6169">took </span><span style="color:#111">7.53s </span><span style="color:#5b6169">at </span><span style="color:#111">Mar 31 13:18:11 PM</span></div>
<div class="t" style="left:1838.20px;top:739.84px;font-size:24.41px;line-height:29px;color:#1a1a1a;font-family:'Liberation Sans', sans-serif;">Evals</div>
<div class="t" style="left:1929.32px;top:739.00px;font-size:25.39px;line-height:30px;color:#1f1f1f;font-family:'Liberation Sans', sans-serif;">Details</div>
<div class="t" style="left:2038.51px;top:739.91px;font-size:24.21px;line-height:29px;color:#1f1f1f;font-family:'Liberation Sans', sans-serif;">Raw Data</div>
<div class="r" style="left:1823.00px;top:776.50px;width:1567.00px;height:2.00px;background:#dadde2;"></div>
<div class="r" style="left:1823.00px;top:776.00px;width:91.20px;height:2.30px;background:#56667f;"></div>
<div class="r" style="left:3186.70px;top:804.80px;width:201.10px;height:63.80px;background:#fff;border:2px solid #d9d9de;border-radius:14px;box-sizing:border-box;box-shadow:0 1px 2px rgba(0,0,0,.05);"></div>
<div class="t" style="left:3212.20px;top:823.11px;font-size:25.63px;line-height:31px;color:#111;font-family:'Liberation Sans', sans-serif;">Columns</div>
<svg class="r" style="left:3335px;top:823px" width="22" height="30" fill="none" stroke="#111" stroke-width="2.6" stroke-linecap="round" stroke-linejoin="round"><path d="M4 10 L11 3.5 L18 10"/><path d="M4 18 L11 24.5 L18 18"/></svg>
<div class="r" style="left:1823.00px;top:887.50px;width:1566.40px;height:519.90px;background:#fff;border:2px solid #cfd6e0;border-radius:14px;box-sizing:border-box;"></div>
<div class="t" style="left:1840.32px;top:911.82px;font-size:28.78px;line-height:35px;color:#111;font-family:'Liberation Sans', sans-serif;font-weight:700;">Case name</div>
<div class="t" style="left:2410.98px;top:910.81px;font-size:30.26px;line-height:36px;color:#111;font-family:'Liberation Sans', sans-serif;font-weight:700;">Metrics</div>
<div class="t" style="left:3203.68px;top:912.34px;font-size:28.73px;line-height:34px;color:#111;font-family:'Liberation Sans', sans-serif;font-weight:700;">Assertions</div>
<div class="r" style="left:1826.00px;top:967.70px;width:1561.40px;height:2.00px;background:#d6dbe3;"></div>
<div class="r" style="left:1826.00px;top:1113.50px;width:1561.40px;height:2.00px;background:#d6dbe3;"></div>
<div class="r" style="left:1826.00px;top:1259.70px;width:1561.40px;height:2.00px;background:#d6dbe3;"></div>
<div class="t" style="left:1842.86px;top:990.91px;font-size:27.65px;line-height:33px;color:#111;font-family:'Liberation Sans', sans-serif;font-style:italic;">Averages</div>
<div class="t" style="left:1841.40px;top:1134.40px;font-size:29.15px;line-height:35px;color:#111;font-family:'Liberation Sans', sans-serif;">vegetarian_recipe</div>
<div class="t" style="left:1840.26px;top:1279.24px;font-size:29.58px;line-height:35px;color:#111;font-family:'Liberation Sans', sans-serif;">gluten_free_recipe</div>
<div class="t" style="left:3203.12px;top:987.97px;font-size:29.50px;line-height:35px;color:#111;font-family:'Liberation Sans', sans-serif;">83.3%</div>
<div class="t" style="left:2411.20px;top:986.45px;font-size:26.98px;line-height:32px;color:#5f6670;font-family:'Liberation Sans', sans-serif;">input_tokens:</div>
<div class="t" style="left:2798.11px;top:990.91px;font-size:24.00px;line-height:29px;color:#111;font-family:'Liberation Mono', monospace;">205.00</div>
<div class="t" style="left:2411.87px;top:1025.94px;font-size:26.99px;line-height:32px;color:#5f6670;font-family:'Liberation Sans', sans-serif;">output_tokens:</div>
<div class="t" style="left:2798.59px;top:1030.41px;font-size:24.00px;line-height:29px;color:#111;font-family:'Liberation Mono', monospace;">453.00</div>
<div class="t" style="left:2411.21px;top:1065.45px;font-size:26.97px;line-height:32px;color:#5f6670;font-family:'Liberation Sans', sans-serif;">requests:</div>
<div class="t" style="left:2798.07px;top:1069.91px;font-size:24.00px;line-height:29px;color:#111;font-family:'Liberation Mono', monospace;">1.00</div>
<div class="t" style="left:2411.20px;top:1131.35px;font-size:26.98px;line-height:32px;color:#5f6670;font-family:'Liberation Sans', sans-serif;">input_tokens:</div>
<div class="t" style="left:2798.11px;top:1135.81px;font-size:24.00px;line-height:29px;color:#111;font-family:'Liberation Mono', monospace;">208.00</div>
<div class="t" style="left:2411.87px;top:1170.84px;font-size:26.99px;line-height:32px;color:#5f6670;font-family:'Liberation Sans', sans-serif;">output_tokens:</div>
<div class="t" style="left:2798.59px;top:1175.31px;font-size:24.00px;line-height:29px;color:#111;font-family:'Liberation Mono', monospace;">424.00</div>
<div class="t" style="left:2411.21px;top:1210.35px;font-size:26.97px;line-height:32px;color:#5f6670;font-family:'Liberation Sans', sans-serif;">requests:</div>
<div class="t" style="left:2798.07px;top:1214.81px;font-size:24.00px;line-height:29px;color:#111;font-family:'Liberation Mono', monospace;">1.00</div>
<div class="t" style="left:2411.20px;top:1277.65px;font-size:26.98px;line-height:32px;color:#5f6670;font-family:'Liberation Sans', sans-serif;">input_tokens:</div>
<div class="t" style="left:2798.11px;top:1282.11px;font-size:24.00px;line-height:29px;color:#111;font-family:'Liberation Mono', monospace;">202.00</div>
<div class="t" style="left:2411.87px;top:1317.14px;font-size:26.99px;line-height:32px;color:#5f6670;font-family:'Liberation Sans', sans-serif;">output_tokens:</div>
<div class="t" style="left:2798.59px;top:1321.61px;font-size:24.00px;line-height:29px;color:#111;font-family:'Liberation Mono', monospace;">482.00</div>
<div class="t" style="left:2411.21px;top:1356.65px;font-size:26.97px;line-height:32px;color:#5f6670;font-family:'Liberation Sans', sans-serif;">requests:</div>
<div class="t" style="left:2798.07px;top:1361.11px;font-size:24.00px;line-height:29px;color:#111;font-family:'Liberation Mono', monospace;">1.00</div>
<svg class="r" style="left:3203.20px;top:1132.50px" width="43" height="43" fill="none" stroke="#e5443c" stroke-width="2.5" stroke-linecap="round" stroke-linejoin="round"><circle cx="21.5" cy="21.5" r="20.2"/><g stroke-width="3"><path d="M15.5 15.5 l12 12 M27.5 15.5 l-12 12"/></g></svg>
<svg class="r" style="left:3255.10px;top:1132.50px" width="43" height="43" fill="none" stroke="#19b27b" stroke-width="2.5" stroke-linecap="round" stroke-linejoin="round"><circle cx="21.5" cy="21.5" r="20.2"/><g stroke-width="3"><path d="M13.5 22.5 l5.5 5.5 l10.5 -11" /></g></svg>
<svg class="r" style="left:3307.00px;top:1132.50px" width="43" height="43" fill="none" stroke="#19b27b" stroke-width="2.5" stroke-linecap="round" stroke-linejoin="round"><circle cx="21.5" cy="21.5" r="20.2"/><g stroke-width="3"><path d="M13.5 22.5 l5.5 5.5 l10.5 -11" /></g></svg>
<svg class="r" style="left:3203.20px;top:1278.60px" width="43" height="43" fill="none" stroke="#19b27b" stroke-width="2.5" stroke-linecap="round" stroke-linejoin="round"><circle cx="21.5" cy="21.5" r="20.2"/><g stroke-width="3"><path d="M13.5 22.5 l5.5 5.5 l10.5 -11" /></g></svg>
<svg class="r" style="left:3255.10px;top:1278.60px" width="43" height="43" fill="none" stroke="#19b27b" stroke-width="2.5" stroke-linecap="round" stroke-linejoin="round"><circle cx="21.5" cy="21.5" r="20.2"/><g stroke-width="3"><path d="M13.5 22.5 l5.5 5.5 l10.5 -11" /></g></svg>
<svg class="r" style="left:3307.00px;top:1278.60px" width="43" height="43" fill="none" stroke="#19b27b" stroke-width="2.5" stroke-linecap="round" stroke-linejoin="round"><circle cx="21.5" cy="21.5" r="20.2"/><g stroke-width="3"><path d="M13.5 22.5 l5.5 5.5 l10.5 -11" /></g></svg>
<svg class="r" style="left:0;top:1808px" width="24" height="24"><path d="M0 0 V24 H24 A24 24 0 0 1 0 0Z" fill="#0f1a17"/></svg>
<svg class="r" style="left:3432px;top:1808px" width="24" height="24"><path d="M24 0 V24 H0 A24 24 0 0 0 24 0Z" fill="#0f1a17"/></svg>
<script>(function(){var w=window.innerWidth;if(w&&Math.abs(w-3456)>2){document.documentElement.style.zoom=(w/3456);}})();</script>
</body></html>
